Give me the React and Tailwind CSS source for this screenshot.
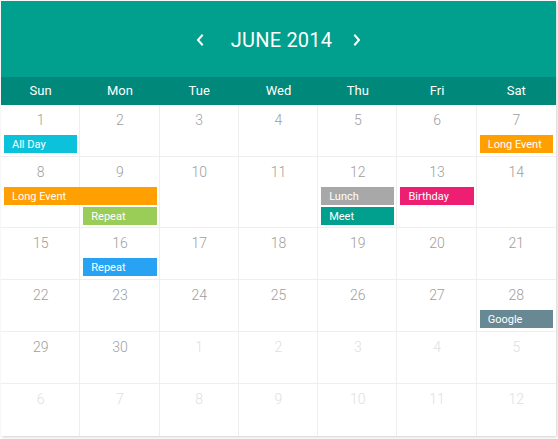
import { useState } from "react";

const DAYS = ["Sun", "Mon", "Tue", "Wed", "Thu", "Fri", "Sat"];

// weeks of June 2014; negative numbers are days outside the month
const WEEKS = [
  { days: [1, 2, 3, 4, 5, 6, 7], events: [
    { title: "All Day", col: "col-start-1", span: "col-span-1", row: "row-start-2", color: "bg-[#0cc2da]" },
    { title: "Long Event", col: "col-start-7", span: "col-span-1", row: "row-start-2", color: "bg-[#ff9f00]" },
  ] },
  { days: [8, 9, 10, 11, 12, 13, 14], events: [
    { title: "Long Event", col: "col-start-1", span: "col-span-2", row: "row-start-2", color: "bg-[#ff9f00]" },
    { title: "Repeat", col: "col-start-2", span: "col-span-1", row: "row-start-3", color: "bg-[#9acc58]" },
    { title: "Lunch", col: "col-start-5", span: "col-span-1", row: "row-start-2", color: "bg-[#a8a8a8]" },
    { title: "Meet", col: "col-start-5", span: "col-span-1", row: "row-start-3", color: "bg-[#009f8e]" },
    { title: "Birthday", col: "col-start-6", span: "col-span-1", row: "row-start-2", color: "bg-[#ee1f72]" },
  ] },
  { days: [15, 16, 17, 18, 19, 20, 21], events: [
    { title: "Repeat", col: "col-start-2", span: "col-span-1", row: "row-start-2", color: "bg-[#28a3f4]" },
  ] },
  { days: [22, 23, 24, 25, 26, 27, 28], events: [
    { title: "Google", col: "col-start-7", span: "col-span-1", row: "row-start-2", color: "bg-[#688893]" },
  ] },
  { days: [29, 30, -1, -2, -3, -4, -5], events: [] },
  { days: [-6, -7, -8, -9, -10, -11, -12], events: [] },
];

const COLS = ["col-start-1", "col-start-2", "col-start-3", "col-start-4", "col-start-5", "col-start-6", "col-start-7"];

const Chevron = ({ dir }) => (
  <svg width="8" height="12" viewBox="0 0 8 12" fill="none" stroke="white" strokeWidth="2" strokeLinecap="square">
    {dir === "left" ? <path d="M6 1.5 L2 6 L6 10.5" /> : <path d="M2 1.5 L6 6 L2 10.5" />}
  </svg>
);

const Week = ({ week, last }) => {
  const twoRows = week.events.some((e) => e.row === "row-start-3");
  return (
    <div
      className={
        "grid grid-cols-7 gap-y-[2px] min-h-[52px] pb-[2px] auto-rows-[18px] " +
        (twoRows ? "grid-rows-[28px_18px_18px] " : "grid-rows-[28px_18px] ") +
        (last ? "" : "border-b border-[#eeeeee]")
      }
    >
      {week.days.map((d, i) => (
        <div
          key={i}
          className={COLS[i] + " row-start-1 row-span-full -mb-[4px] " + (i < 6 ? "border-r border-[#eeeeee]" : "")}
        />
      ))}
      {week.days.map((d, i) => (
        <div
          key={"n" + i}
          className={
            COLS[i] +
            " row-start-1 flex items-center justify-center pt-[3px] text-[14px] font-light " +
            (d > 0 ? "text-[#9e9e9e]" : "text-[#e0e0e0]")
          }
        >
          {Math.abs(d)}
        </div>
      ))}
      {week.events.map((e, i) => (
        <div
          key={"e" + i}
          className={`${e.col} ${e.span} ${e.row} ${e.color} mx-[3px] pl-[8px] flex items-center text-white text-[11px] leading-none`}
        >
          {e.title}
        </div>
      ))}
    </div>
  );
};

export default function App() {
  const [month] = useState("JUNE 2014");

  return (
    <div className="p-px bg-white min-h-screen" style={{ fontFamily: "Roboto, 'Noto Sans', sans-serif" }}>
      <div className="w-[555px] bg-white shadow-[1px_1px_3px_rgba(0,0,0,0.2)]">
        <div className="h-[76px] bg-[#009f8e] flex items-center justify-center pt-[1px]">
          <button className="w-[20px] h-[20px] flex items-center justify-center mr-[21px]">
            <Chevron dir="left" />
          </button>
          <div className="text-white text-[20px] tracking-[0.2px] mr-[15px]">{month}</div>
          <button className="w-[20px] h-[20px] flex items-center justify-center">
            <Chevron dir="right" />
          </button>
        </div>
        <div className="grid grid-cols-7 h-[28px] bg-[#00887a]">
          {DAYS.map((d) => (
            <div key={d} className="flex items-center justify-center text-white text-[13px]">
              {d}
            </div>
          ))}
        </div>
        {WEEKS.map((w, i) => (
          <Week key={i} week={w} last={i === WEEKS.length - 1} />
        ))}
      </div>
    </div>
  );
}
